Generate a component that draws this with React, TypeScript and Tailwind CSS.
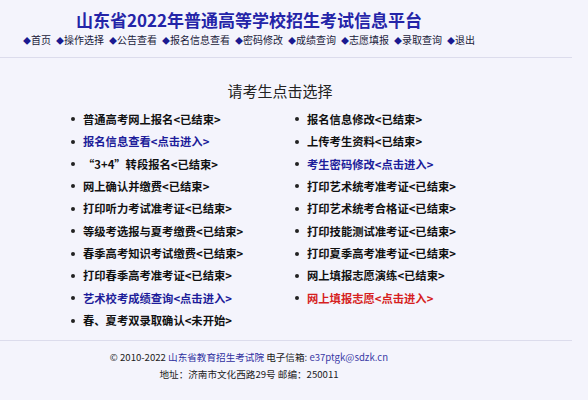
const navItems = ['首页', '操作选择', '公告查看', '报名信息查看', '密码修改', '成绩查询', '志愿填报', '录取查询', '退出'];

type Item = { label: string; status: string; tone?: 'link' | 'hot' };

const leftItems: Item[] = [
  { label: '普通高考网上报名', status: '已结束' },
  { label: '报名信息查看', status: '点击进入', tone: 'link' },
  { label: '“3+4”转段报名', status: '已结束' },
  { label: '网上确认并缴费', status: '已结束' },
  { label: '打印听力考试准考证', status: '已结束' },
  { label: '等级考选报与夏考缴费', status: '已结束' },
  { label: '春季高考知识考试缴费', status: '已结束' },
  { label: '打印春季高考准考证', status: '已结束' },
  { label: '艺术校考成绩查询', status: '点击进入', tone: 'link' },
  { label: '春、夏考双录取确认', status: '未开始' },
];

const rightItems: Item[] = [
  { label: '报名信息修改', status: '已结束' },
  { label: '上传考生资料', status: '已结束' },
  { label: '考生密码修改', status: '点击进入', tone: 'link' },
  { label: '打印艺术统考准考证', status: '已结束' },
  { label: '打印艺术统考合格证', status: '已结束' },
  { label: '打印技能测试准考证', status: '已结束' },
  { label: '打印夏季高考准考证', status: '已结束' },
  { label: '网上填报志愿演练', status: '已结束' },
  { label: '网上填报志愿', status: '点击进入', tone: 'hot' },
];

function Entry({ item }: { item: Item }) {
  const color =
    item.tone === 'link' ? 'text-[#1d1d9a]' : item.tone === 'hot' ? 'text-[#d61f1f]' : 'text-[#111]';
  return (
    <li className="flex items-center h-[22.4px]">
      <span className="w-[4px] h-[4px] rounded-full bg-[#222] shrink-0" />
      <span className={`ml-[8px] text-[11.3px] font-bold whitespace-nowrap ${color}`}>
        {item.label}&lt;{item.status}&gt;
      </span>
    </li>
  );
}

export default function App() {
  return (
    <div
      className="w-[588px] h-[400px] bg-[#f4f4fc] overflow-hidden"
      style={{ fontFamily: '"Noto Sans CJK SC", "Noto Sans", sans-serif' }}
    >
      {/* header */}
      <div className="w-[498px] pt-[8px] text-center">
        <h1 className="text-[17px] leading-[24px] font-bold text-[#2424a8]">
          山东省2022年普通高等学校招生考试信息平台
        </h1>
        <nav className="mt-[1px] text-[10px] leading-[14px] text-[#1a1a3a] whitespace-nowrap">
          {navItems.map((n, i) => (
            <span key={n} className={i > 0 ? 'ml-[5px]' : ''}>
              <span className="text-[#1a1a90] text-[8px]">◆</span>
              {n}
            </span>
          ))}
        </nav>
      </div>

      <div className="mt-[9px] w-[572px] border-t border-[#dcdcec]" />

      {/* body */}
      <div className="w-[560px] mt-[23px] text-center text-[15px] leading-[20px] text-[#222]">
        请考生点击选择
      </div>
      <div className="mt-[7px] pl-[71px] grid grid-cols-[224px_1fr]">
        <ul>
          {leftItems.map((it) => (
            <Entry key={it.label} item={it} />
          ))}
        </ul>
        <ul>
          {rightItems.map((it) => (
            <Entry key={it.label} item={it} />
          ))}
        </ul>
      </div>

      <div className="mt-[8px] w-[572px] border-t border-[#dcdcec]" />

      {/* footer */}
      <div className="w-[498px] pt-[8px] text-center text-[9.6px] leading-[17px] text-[#222]">
        <p>
          © 2010-2022 <span className="text-[#2f2fa0]">山东省教育招生考试院</span> 电子信箱:{' '}
          <span className="text-[#3a3aa6]">e37ptgk@sdzk.cn</span>
        </p>
        <p>地址：济南市文化西路29号 邮编：250011</p>
      </div>
    </div>
  );
}
